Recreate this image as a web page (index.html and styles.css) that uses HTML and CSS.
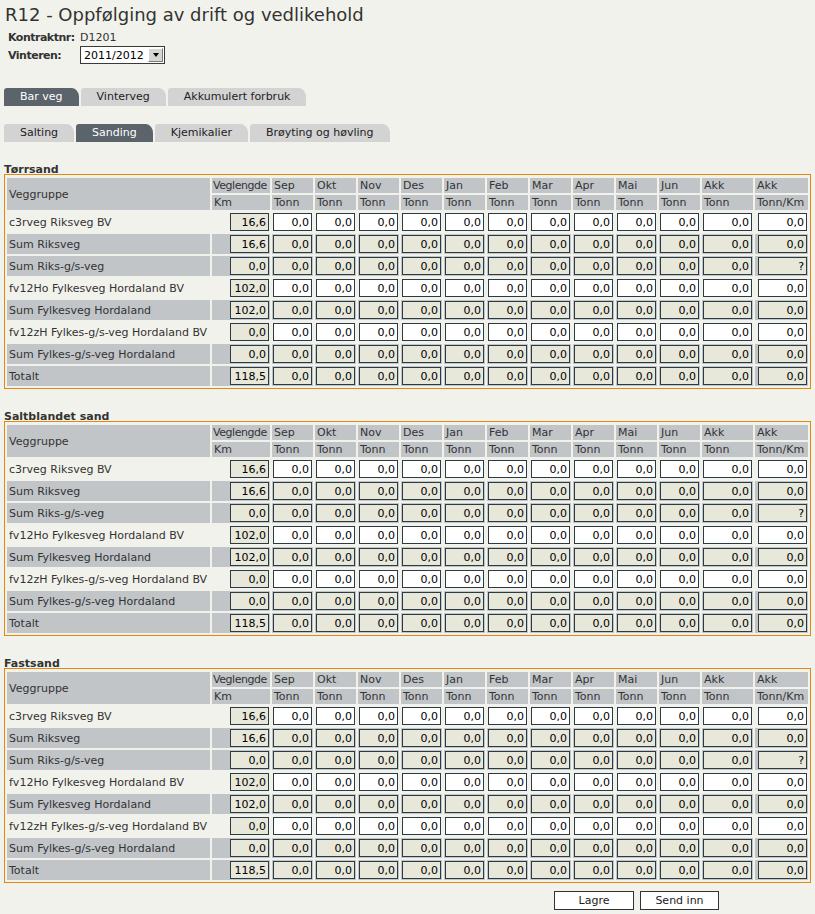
FILE: index.html
```html
<!DOCTYPE html>
<html lang="no">
<head>
<meta charset="utf-8">
<title>R12 - Oppfølging av drift og vedlikehold</title>
<link rel="stylesheet" href="styles.css">
</head>
<body>
<div class="page">
  <h1 class="title">R12 - Oppfølging av drift og vedlikehold</h1>
  <div class="info">
    <span class="lbl">Kontraktnr:</span><span class="val">D1201</span>
    <span class="lbl">Vinteren:</span>
    <div class="select"><span class="sel-text">2011/2012</span><span class="sel-btn"><span class="tri"></span></span></div>
  </div>

  <div class="tabs tabs-main">
    <span class="tab active">Bar veg</span>
    <span class="tab">Vinterveg</span>
    <span class="tab">Akkumulert forbruk</span>
  </div>
  <div class="tabs tabs-sub">
    <span class="tab">Salting</span>
    <span class="tab active">Sanding</span>
    <span class="tab">Kjemikalier</span>
    <span class="tab">Brøyting og høvling</span>
  </div>

  <h2 class="sec">Tørrsand</h2>
  <table class="grid">
    <colgroup><col class="c-name"><col class="c-km"><col class="c-m"><col class="c-m"><col class="c-m"><col class="c-m"><col class="c-m"><col class="c-m"><col class="c-m"><col class="c-m"><col class="c-m"><col class="c-m"><col class="c-akk"><col class="c-tk"></colgroup>
    <thead>
      <tr><th rowspan="2">Veggruppe</th><th class="tight">Veglengde</th><th>Sep</th><th>Okt</th><th>Nov</th><th>Des</th><th>Jan</th><th>Feb</th><th>Mar</th><th>Apr</th><th>Mai</th><th>Jun</th><th>Akk</th><th>Akk</th></tr>
      <tr><th>Km</th><th>Tonn</th><th>Tonn</th><th>Tonn</th><th>Tonn</th><th>Tonn</th><th>Tonn</th><th>Tonn</th><th>Tonn</th><th>Tonn</th><th>Tonn</th><th>Tonn</th><th>Tonn/Km</th></tr>
    </thead>
    <tbody>
      <tr class="plain"><td>c3rveg Riksveg BV</td><td><input class="ro" value="16,6" readonly></td><td><input value="0,0"></td><td><input value="0,0"></td><td><input value="0,0"></td><td><input value="0,0"></td><td><input value="0,0"></td><td><input value="0,0"></td><td><input value="0,0"></td><td><input value="0,0"></td><td><input value="0,0"></td><td><input value="0,0"></td><td><input value="0,0"></td><td><input value="0,0"></td></tr>
      <tr class="sum"><td>Sum Riksveg</td><td><input class="ro" value="16,6" readonly></td><td><input class="ro" value="0,0" readonly></td><td><input class="ro" value="0,0" readonly></td><td><input class="ro" value="0,0" readonly></td><td><input class="ro" value="0,0" readonly></td><td><input class="ro" value="0,0" readonly></td><td><input class="ro" value="0,0" readonly></td><td><input class="ro" value="0,0" readonly></td><td><input class="ro" value="0,0" readonly></td><td><input class="ro" value="0,0" readonly></td><td><input class="ro" value="0,0" readonly></td><td><input class="ro" value="0,0" readonly></td><td><input class="ro" value="0,0" readonly></td></tr>
      <tr class="sum"><td>Sum Riks-g/s-veg</td><td><input class="ro" value="0,0" readonly></td><td><input class="ro" value="0,0" readonly></td><td><input class="ro" value="0,0" readonly></td><td><input class="ro" value="0,0" readonly></td><td><input class="ro" value="0,0" readonly></td><td><input class="ro" value="0,0" readonly></td><td><input class="ro" value="0,0" readonly></td><td><input class="ro" value="0,0" readonly></td><td><input class="ro" value="0,0" readonly></td><td><input class="ro" value="0,0" readonly></td><td><input class="ro" value="0,0" readonly></td><td><input class="ro" value="0,0" readonly></td><td><input class="ro" value="?" readonly></td></tr>
      <tr class="plain"><td>fv12Ho Fylkesveg Hordaland BV</td><td><input class="ro" value="102,0" readonly></td><td><input value="0,0"></td><td><input value="0,0"></td><td><input value="0,0"></td><td><input value="0,0"></td><td><input value="0,0"></td><td><input value="0,0"></td><td><input value="0,0"></td><td><input value="0,0"></td><td><input value="0,0"></td><td><input value="0,0"></td><td><input value="0,0"></td><td><input value="0,0"></td></tr>
      <tr class="sum"><td>Sum Fylkesveg Hordaland</td><td><input class="ro" value="102,0" readonly></td><td><input class="ro" value="0,0" readonly></td><td><input class="ro" value="0,0" readonly></td><td><input class="ro" value="0,0" readonly></td><td><input class="ro" value="0,0" readonly></td><td><input class="ro" value="0,0" readonly></td><td><input class="ro" value="0,0" readonly></td><td><input class="ro" value="0,0" readonly></td><td><input class="ro" value="0,0" readonly></td><td><input class="ro" value="0,0" readonly></td><td><input class="ro" value="0,0" readonly></td><td><input class="ro" value="0,0" readonly></td><td><input class="ro" value="0,0" readonly></td></tr>
      <tr class="plain"><td>fv12zH Fylkes-g/s-veg Hordaland BV</td><td><input class="ro" value="0,0" readonly></td><td><input value="0,0"></td><td><input value="0,0"></td><td><input value="0,0"></td><td><input value="0,0"></td><td><input value="0,0"></td><td><input value="0,0"></td><td><input value="0,0"></td><td><input value="0,0"></td><td><input value="0,0"></td><td><input value="0,0"></td><td><input value="0,0"></td><td><input value="0,0"></td></tr>
      <tr class="sum"><td>Sum Fylkes-g/s-veg Hordaland</td><td><input class="ro" value="0,0" readonly></td><td><input class="ro" value="0,0" readonly></td><td><input class="ro" value="0,0" readonly></td><td><input class="ro" value="0,0" readonly></td><td><input class="ro" value="0,0" readonly></td><td><input class="ro" value="0,0" readonly></td><td><input class="ro" value="0,0" readonly></td><td><input class="ro" value="0,0" readonly></td><td><input class="ro" value="0,0" readonly></td><td><input class="ro" value="0,0" readonly></td><td><input class="ro" value="0,0" readonly></td><td><input class="ro" value="0,0" readonly></td><td><input class="ro" value="0,0" readonly></td></tr>
      <tr class="sum"><td>Totalt</td><td><input class="ro" value="118,5" readonly></td><td><input class="ro" value="0,0" readonly></td><td><input class="ro" value="0,0" readonly></td><td><input class="ro" value="0,0" readonly></td><td><input class="ro" value="0,0" readonly></td><td><input class="ro" value="0,0" readonly></td><td><input class="ro" value="0,0" readonly></td><td><input class="ro" value="0,0" readonly></td><td><input class="ro" value="0,0" readonly></td><td><input class="ro" value="0,0" readonly></td><td><input class="ro" value="0,0" readonly></td><td><input class="ro" value="0,0" readonly></td><td><input class="ro" value="0,0" readonly></td></tr>
    </tbody>
  </table>

  <h2 class="sec">Saltblandet sand</h2>
  <table class="grid">
    <colgroup><col class="c-name"><col class="c-km"><col class="c-m"><col class="c-m"><col class="c-m"><col class="c-m"><col class="c-m"><col class="c-m"><col class="c-m"><col class="c-m"><col class="c-m"><col class="c-m"><col class="c-akk"><col class="c-tk"></colgroup>
    <thead>
      <tr><th rowspan="2">Veggruppe</th><th class="tight">Veglengde</th><th>Sep</th><th>Okt</th><th>Nov</th><th>Des</th><th>Jan</th><th>Feb</th><th>Mar</th><th>Apr</th><th>Mai</th><th>Jun</th><th>Akk</th><th>Akk</th></tr>
      <tr><th>Km</th><th>Tonn</th><th>Tonn</th><th>Tonn</th><th>Tonn</th><th>Tonn</th><th>Tonn</th><th>Tonn</th><th>Tonn</th><th>Tonn</th><th>Tonn</th><th>Tonn</th><th>Tonn/Km</th></tr>
    </thead>
    <tbody>
      <tr class="plain"><td>c3rveg Riksveg BV</td><td><input class="ro" value="16,6" readonly></td><td><input value="0,0"></td><td><input value="0,0"></td><td><input value="0,0"></td><td><input value="0,0"></td><td><input value="0,0"></td><td><input value="0,0"></td><td><input value="0,0"></td><td><input value="0,0"></td><td><input value="0,0"></td><td><input value="0,0"></td><td><input value="0,0"></td><td><input value="0,0"></td></tr>
      <tr class="sum"><td>Sum Riksveg</td><td><input class="ro" value="16,6" readonly></td><td><input class="ro" value="0,0" readonly></td><td><input class="ro" value="0,0" readonly></td><td><input class="ro" value="0,0" readonly></td><td><input class="ro" value="0,0" readonly></td><td><input class="ro" value="0,0" readonly></td><td><input class="ro" value="0,0" readonly></td><td><input class="ro" value="0,0" readonly></td><td><input class="ro" value="0,0" readonly></td><td><input class="ro" value="0,0" readonly></td><td><input class="ro" value="0,0" readonly></td><td><input class="ro" value="0,0" readonly></td><td><input class="ro" value="0,0" readonly></td></tr>
      <tr class="sum"><td>Sum Riks-g/s-veg</td><td><input class="ro" value="0,0" readonly></td><td><input class="ro" value="0,0" readonly></td><td><input class="ro" value="0,0" readonly></td><td><input class="ro" value="0,0" readonly></td><td><input class="ro" value="0,0" readonly></td><td><input class="ro" value="0,0" readonly></td><td><input class="ro" value="0,0" readonly></td><td><input class="ro" value="0,0" readonly></td><td><input class="ro" value="0,0" readonly></td><td><input class="ro" value="0,0" readonly></td><td><input class="ro" value="0,0" readonly></td><td><input class="ro" value="0,0" readonly></td><td><input class="ro" value="?" readonly></td></tr>
      <tr class="plain"><td>fv12Ho Fylkesveg Hordaland BV</td><td><input class="ro" value="102,0" readonly></td><td><input value="0,0"></td><td><input value="0,0"></td><td><input value="0,0"></td><td><input value="0,0"></td><td><input value="0,0"></td><td><input value="0,0"></td><td><input value="0,0"></td><td><input value="0,0"></td><td><input value="0,0"></td><td><input value="0,0"></td><td><input value="0,0"></td><td><input value="0,0"></td></tr>
      <tr class="sum"><td>Sum Fylkesveg Hordaland</td><td><input class="ro" value="102,0" readonly></td><td><input class="ro" value="0,0" readonly></td><td><input class="ro" value="0,0" readonly></td><td><input class="ro" value="0,0" readonly></td><td><input class="ro" value="0,0" readonly></td><td><input class="ro" value="0,0" readonly></td><td><input class="ro" value="0,0" readonly></td><td><input class="ro" value="0,0" readonly></td><td><input class="ro" value="0,0" readonly></td><td><input class="ro" value="0,0" readonly></td><td><input class="ro" value="0,0" readonly></td><td><input class="ro" value="0,0" readonly></td><td><input class="ro" value="0,0" readonly></td></tr>
      <tr class="plain"><td>fv12zH Fylkes-g/s-veg Hordaland BV</td><td><input class="ro" value="0,0" readonly></td><td><input value="0,0"></td><td><input value="0,0"></td><td><input value="0,0"></td><td><input value="0,0"></td><td><input value="0,0"></td><td><input value="0,0"></td><td><input value="0,0"></td><td><input value="0,0"></td><td><input value="0,0"></td><td><input value="0,0"></td><td><input value="0,0"></td><td><input value="0,0"></td></tr>
      <tr class="sum"><td>Sum Fylkes-g/s-veg Hordaland</td><td><input class="ro" value="0,0" readonly></td><td><input class="ro" value="0,0" readonly></td><td><input class="ro" value="0,0" readonly></td><td><input class="ro" value="0,0" readonly></td><td><input class="ro" value="0,0" readonly></td><td><input class="ro" value="0,0" readonly></td><td><input class="ro" value="0,0" readonly></td><td><input class="ro" value="0,0" readonly></td><td><input class="ro" value="0,0" readonly></td><td><input class="ro" value="0,0" readonly></td><td><input class="ro" value="0,0" readonly></td><td><input class="ro" value="0,0" readonly></td><td><input class="ro" value="0,0" readonly></td></tr>
      <tr class="sum"><td>Totalt</td><td><input class="ro" value="118,5" readonly></td><td><input class="ro" value="0,0" readonly></td><td><input class="ro" value="0,0" readonly></td><td><input class="ro" value="0,0" readonly></td><td><input class="ro" value="0,0" readonly></td><td><input class="ro" value="0,0" readonly></td><td><input class="ro" value="0,0" readonly></td><td><input class="ro" value="0,0" readonly></td><td><input class="ro" value="0,0" readonly></td><td><input class="ro" value="0,0" readonly></td><td><input class="ro" value="0,0" readonly></td><td><input class="ro" value="0,0" readonly></td><td><input class="ro" value="0,0" readonly></td></tr>
    </tbody>
  </table>

  <h2 class="sec">Fastsand</h2>
  <table class="grid">
    <colgroup><col class="c-name"><col class="c-km"><col class="c-m"><col class="c-m"><col class="c-m"><col class="c-m"><col class="c-m"><col class="c-m"><col class="c-m"><col class="c-m"><col class="c-m"><col class="c-m"><col class="c-akk"><col class="c-tk"></colgroup>
    <thead>
      <tr><th rowspan="2">Veggruppe</th><th class="tight">Veglengde</th><th>Sep</th><th>Okt</th><th>Nov</th><th>Des</th><th>Jan</th><th>Feb</th><th>Mar</th><th>Apr</th><th>Mai</th><th>Jun</th><th>Akk</th><th>Akk</th></tr>
      <tr><th>Km</th><th>Tonn</th><th>Tonn</th><th>Tonn</th><th>Tonn</th><th>Tonn</th><th>Tonn</th><th>Tonn</th><th>Tonn</th><th>Tonn</th><th>Tonn</th><th>Tonn</th><th>Tonn/Km</th></tr>
    </thead>
    <tbody>
      <tr class="plain"><td>c3rveg Riksveg BV</td><td><input class="ro" value="16,6" readonly></td><td><input value="0,0"></td><td><input value="0,0"></td><td><input value="0,0"></td><td><input value="0,0"></td><td><input value="0,0"></td><td><input value="0,0"></td><td><input value="0,0"></td><td><input value="0,0"></td><td><input value="0,0"></td><td><input value="0,0"></td><td><input value="0,0"></td><td><input value="0,0"></td></tr>
      <tr class="sum"><td>Sum Riksveg</td><td><input class="ro" value="16,6" readonly></td><td><input class="ro" value="0,0" readonly></td><td><input class="ro" value="0,0" readonly></td><td><input class="ro" value="0,0" readonly></td><td><input class="ro" value="0,0" readonly></td><td><input class="ro" value="0,0" readonly></td><td><input class="ro" value="0,0" readonly></td><td><input class="ro" value="0,0" readonly></td><td><input class="ro" value="0,0" readonly></td><td><input class="ro" value="0,0" readonly></td><td><input class="ro" value="0,0" readonly></td><td><input class="ro" value="0,0" readonly></td><td><input class="ro" value="0,0" readonly></td></tr>
      <tr class="sum"><td>Sum Riks-g/s-veg</td><td><input class="ro" value="0,0" readonly></td><td><input class="ro" value="0,0" readonly></td><td><input class="ro" value="0,0" readonly></td><td><input class="ro" value="0,0" readonly></td><td><input class="ro" value="0,0" readonly></td><td><input class="ro" value="0,0" readonly></td><td><input class="ro" value="0,0" readonly></td><td><input class="ro" value="0,0" readonly></td><td><input class="ro" value="0,0" readonly></td><td><input class="ro" value="0,0" readonly></td><td><input class="ro" value="0,0" readonly></td><td><input class="ro" value="0,0" readonly></td><td><input class="ro" value="?" readonly></td></tr>
      <tr class="plain"><td>fv12Ho Fylkesveg Hordaland BV</td><td><input class="ro" value="102,0" readonly></td><td><input value="0,0"></td><td><input value="0,0"></td><td><input value="0,0"></td><td><input value="0,0"></td><td><input value="0,0"></td><td><input value="0,0"></td><td><input value="0,0"></td><td><input value="0,0"></td><td><input value="0,0"></td><td><input value="0,0"></td><td><input value="0,0"></td><td><input value="0,0"></td></tr>
      <tr class="sum"><td>Sum Fylkesveg Hordaland</td><td><input class="ro" value="102,0" readonly></td><td><input class="ro" value="0,0" readonly></td><td><input class="ro" value="0,0" readonly></td><td><input class="ro" value="0,0" readonly></td><td><input class="ro" value="0,0" readonly></td><td><input class="ro" value="0,0" readonly></td><td><input class="ro" value="0,0" readonly></td><td><input class="ro" value="0,0" readonly></td><td><input class="ro" value="0,0" readonly></td><td><input class="ro" value="0,0" readonly></td><td><input class="ro" value="0,0" readonly></td><td><input class="ro" value="0,0" readonly></td><td><input class="ro" value="0,0" readonly></td></tr>
      <tr class="plain"><td>fv12zH Fylkes-g/s-veg Hordaland BV</td><td><input class="ro" value="0,0" readonly></td><td><input value="0,0"></td><td><input value="0,0"></td><td><input value="0,0"></td><td><input value="0,0"></td><td><input value="0,0"></td><td><input value="0,0"></td><td><input value="0,0"></td><td><input value="0,0"></td><td><input value="0,0"></td><td><input value="0,0"></td><td><input value="0,0"></td><td><input value="0,0"></td></tr>
      <tr class="sum"><td>Sum Fylkes-g/s-veg Hordaland</td><td><input class="ro" value="0,0" readonly></td><td><input class="ro" value="0,0" readonly></td><td><input class="ro" value="0,0" readonly></td><td><input class="ro" value="0,0" readonly></td><td><input class="ro" value="0,0" readonly></td><td><input class="ro" value="0,0" readonly></td><td><input class="ro" value="0,0" readonly></td><td><input class="ro" value="0,0" readonly></td><td><input class="ro" value="0,0" readonly></td><td><input class="ro" value="0,0" readonly></td><td><input class="ro" value="0,0" readonly></td><td><input class="ro" value="0,0" readonly></td><td><input class="ro" value="0,0" readonly></td></tr>
      <tr class="sum"><td>Totalt</td><td><input class="ro" value="118,5" readonly></td><td><input class="ro" value="0,0" readonly></td><td><input class="ro" value="0,0" readonly></td><td><input class="ro" value="0,0" readonly></td><td><input class="ro" value="0,0" readonly></td><td><input class="ro" value="0,0" readonly></td><td><input class="ro" value="0,0" readonly></td><td><input class="ro" value="0,0" readonly></td><td><input class="ro" value="0,0" readonly></td><td><input class="ro" value="0,0" readonly></td><td><input class="ro" value="0,0" readonly></td><td><input class="ro" value="0,0" readonly></td><td><input class="ro" value="0,0" readonly></td></tr>
    </tbody>
  </table>

  <div class="actions">
    <button class="btn btn-save" type="button">Lagre</button>
    <button class="btn btn-send" type="button">Send inn</button>
  </div>
</div>
</body>
</html>
```

FILE: styles.css
```css
html, body {
  margin: 0;
  padding: 0;
  background: #f2f2ec;
}
body {
  font-family: "DejaVu Sans", Verdana, sans-serif;
  font-size: 11px;
  color: #333;
}
.page {
  padding: 0 4px;
}
.title {
  margin: 0;
  padding: 4px 0 0 1px;
  font-size: 18px;
  line-height: 22px;
  font-weight: normal;
  color: #333;
}
.info {
  display: grid;
  grid-template-columns: 72px auto;
  grid-template-rows: 18px 18px;
  align-items: center;
  margin: 2px 0 0 4px;
  white-space: nowrap;
}
.lbl {
  font-weight: bold;
  letter-spacing: -0.5px;
}
.select {
  display: flex;
  align-items: center;
  width: 85px;
  height: 18px;
  box-sizing: border-box;
  border: 1px solid #3a3a3a;
  background: #fff;
  color: #000;
  padding: 0 1px 0 3px;
}
.sel-text {
  flex: 1;
  font-size: 11px;
}
.sel-btn {
  width: 15px;
  height: 14px;
  box-sizing: border-box;
  background: #d8d6d0;
  border: 1px solid;
  border-color: #fff #7a7a7a #7a7a7a #fff;
  display: flex;
  align-items: center;
  justify-content: center;
}
.tri {
  width: 0;
  height: 0;
  border-left: 3.5px solid transparent;
  border-right: 3.5px solid transparent;
  border-top: 4px solid #000;
}
.tabs {
  display: flex;
  gap: 2px;
}
.tabs-main {
  margin-top: 24px;
}
.tabs-sub {
  margin-top: 18px;
}
.tab {
  height: 18px;
  line-height: 18px;
  padding: 0 16px;
  background: #d3d3d3;
  color: #222;
  border-radius: 3px 7px 0 0 / 3px 9px 0 0;
  white-space: nowrap;
}
.tab.active {
  background: #5b636b;
  color: #fff;
}
.sec {
  margin: 22px 0 -2px 0;
  font-size: 11px;
  line-height: 12px;
  font-weight: bold;
  color: #333;
}
.grid {
  table-layout: fixed;
  width: 807px;
  border: 1px solid #e4870f;
  border-collapse: separate;
  border-spacing: 2px;
  padding-top: 1px;
}
.c-name { width: 203px; }
.c-km { width: 58px; }
.c-m { width: 41px; }
.c-akk { width: 51px; }
.c-tk { width: 53px; }
.grid th {
  background: #c1c5c8;
  font-weight: normal;
  text-align: left;
  padding: 1px 2px;
  height: 13px;
  line-height: 13px;
  color: #333;
  white-space: nowrap;
  overflow: hidden;
}
.grid th.tight {
  padding: 1px 0 1px 1px;
  letter-spacing: -0.45px;
}
.grid td {
  padding: 1px;
  height: 18px;
  white-space: nowrap;
  overflow: hidden;
}
.grid td:first-child {
  padding-left: 2px;
  color: #333;
}
.grid tr.sum td {
  background: #c1c5c8;
}
.grid input {
  display: block;
  margin-left: auto;
  width: 39px;
  height: 18px;
  box-sizing: border-box;
  border: 1px solid #2c3a42;
  background: #fff;
  padding: 0 2px 0 0;
  text-align: right;
  font-family: "DejaVu Sans", Verdana, sans-serif;
  font-size: 11px;
  color: #000;
  outline: none;
}
.grid input.ro {
  background: #e7e7da;
}
.grid td:nth-last-child(-n+2) input {
  width: 49px;
}
.actions {
  display: flex;
  gap: 6px;
  margin: 8px 0 0 550px;
}
.btn {
  height: 19px;
  box-sizing: border-box;
  border: 1px solid #333;
  background: #fff;
  font-family: "DejaVu Sans", Verdana, sans-serif;
  font-size: 11px;
  color: #222;
  padding: 0;
  border-radius: 0;
}
.btn-save { width: 80px; }
.btn-send { width: 79px; }
```
